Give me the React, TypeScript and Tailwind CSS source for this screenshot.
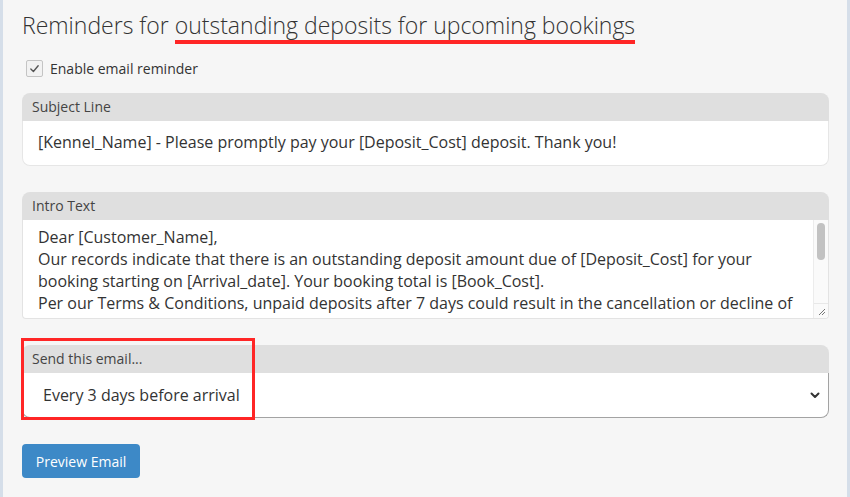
import React from 'react';

const introLines = [
  'Dear [Customer_Name],',
  'Our records indicate that there is an outstanding deposit amount due of [Deposit_Cost] for your booking starting on [Arrival_date]. Your booking total is [Book_Cost].',
  'Per our Terms & Conditions, unpaid deposits after 7 days could result in the cancellation or decline of your booking and the release of the reserved dates to other customers.',
];

function Panel({ label, children }: { label: string; children: React.ReactNode }) {
  return (
    <div className="relative">
      <div className="h-[28px] rounded-t-[8px] bg-[#dfdfdf] px-[10px] text-[14px] leading-[28px] text-[#444]">{label}</div>
      {children}
    </div>
  );
}

export default function App() {
  return (
    <div className="min-h-screen w-full border-x-[3px] border-[#d5dee9] bg-[#f6f6f6] font-['Open_Sans',sans-serif] text-[#333]">
      <div className="pl-[19px] pr-[18px] pt-[9px]">
        {/* Titulo */}
        <h1 className="text-[23px] font-light leading-[32px] text-[#333]">
          Reminders for{' '}
          <span className="relative">
            outstanding deposits for upcoming bookings
            <span className="absolute left-0 right-0 top-[31px] h-[4px] bg-[#ff2626]" />
          </span>
        </h1>

        {/* Checkbox */}
        <label className="mt-[17px] flex h-[20px] items-center gap-[7px] pl-[4px] text-[14px] text-[#333]">
          <span className="flex h-[17px] w-[17px] items-center justify-center rounded-[2px] border border-[#c4c4c4] bg-[#f2f2f2]">
            <svg width="11" height="11" viewBox="0 0 12 12" fill="none">
              <path d="M2 6.5 L4.8 9.2 L10 3" stroke="#555" strokeWidth="1.5" strokeLinecap="round" strokeLinejoin="round" />
            </svg>
          </span>
          Enable email reminder
        </label>

        {/* Subject */}
        <div className="mt-[15px]">
          <Panel label="Subject Line">
            <div className="h-[45px] rounded-b-[8px] border-x border-b border-[#e6e6e6] bg-white pl-[15px] text-[16px] leading-[43px] text-[#333]">
              [Kennel_Name] - Please promptly pay your [Deposit_Cost] deposit. Thank you!
            </div>
          </Panel>
        </div>

        {/* Intro text */}
        <div className="mt-[26px]">
          <Panel label="Intro Text">
            <div className="flex h-[99px] overflow-hidden rounded-b-[4px] border-x border-b border-[#e3e3e3] bg-white">
              <div className="flex-1 overflow-hidden pl-[15px] pr-[8px] pt-[6px] text-[16px] leading-[22px] text-[#333]">
                {introLines.map((line, i) => (
                  <p key={i}>{line}</p>
                ))}
              </div>
              <div className="flex w-[15px] flex-col border-l border-[#ececec] bg-[#fafafa]">
                <div className="flex flex-1 justify-center pt-[3px]">
                  <div className="h-[37px] w-[8px] rounded-full bg-[#c2c2c2]" />
                </div>
                <div className="flex h-[15px] items-end justify-end border-t border-[#e8e8e8] p-[2px]">
                  <svg width="8" height="8" viewBox="0 0 8 8">
                    <path d="M1 7 L7 1 M4 7 L7 4" stroke="#777" strokeWidth="1" />
                  </svg>
                </div>
              </div>
            </div>
          </Panel>
        </div>

        {/* Send email */}
        <div className="relative mt-[26px]">
          <Panel label="Send this email...">
            <div className="flex h-[45px] items-center justify-between rounded-b-[8px] border border-t-0 border-[#a3a3a3] bg-white pl-[20px] pr-[8px] text-[16px] text-[#333]">
              <span>Every 3 days before arrival</span>
              <svg width="10" height="7" viewBox="0 0 10 7" fill="none">
                <path d="M1.5 1.5 L5 5 L8.5 1.5" stroke="#333" strokeWidth="2" strokeLinecap="round" strokeLinejoin="round" />
              </svg>
            </div>
          </Panel>
          <div className="pointer-events-none absolute left-[-1px] top-[-7px] h-[82px] w-[234px] border-[3px] border-[#ff2626]" />
        </div>

        <button className="mt-[26px] h-[34px] w-[118px] rounded-[4px] bg-[#3d89c7] text-[14px] font-medium text-white">
          Preview Email
        </button>
      </div>
    </div>
  );
}
